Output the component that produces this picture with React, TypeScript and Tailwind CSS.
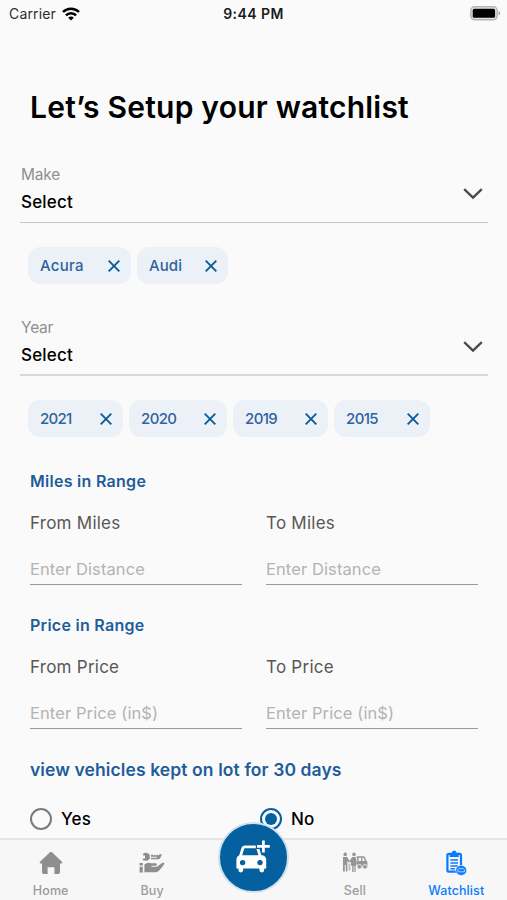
import type { ReactNode } from "react";
import clsx from "clsx";

const makes = [
  { label: "Acura", chip: "w-[103px] tracking-[0.25px]" },
  { label: "Audi", chip: "w-[91px] tracking-[0.1px]" },
];

const years = [
  { label: "2021", chip: "w-[95px] tracking-[-0.7px]" },
  { label: "2020", chip: "w-[98px] tracking-[-0.6px]" },
  { label: "2019", chip: "w-[95px] tracking-[-0.6px]" },
  { label: "2015", chip: "w-[96px] tracking-[-0.6px]" },
];

function WifiIcon() {
  return (
    <svg width="18" height="14" viewBox="0 0 18 14" fill="none" stroke="#000" strokeWidth="2.5">
      <path d="M1 5C5.4 0.5 12.6 0.5 17 5" />
      <path d="M3.9 8.3C6.7 5.4 11.3 5.4 14.1 8.3" />
      <path d="M9 13.5L6.2 10.7C7.7 9.2 10.3 9.2 11.8 10.7Z" fill="#000" stroke="none" />
    </svg>
  );
}

function BatteryIcon() {
  return (
    <svg width="31" height="15" viewBox="0 0 31 15">
      <rect x="0.8" y="0.8" width="26.4" height="13" rx="4" fill="#e4e4e4" stroke="#b4b4b4" strokeWidth="1.5" />
      <rect x="2.7" y="2.8" width="22.4" height="9" rx="1.6" fill="#000" />
      <path d="M28.6 5.2C30.8 5.8 30.8 8.8 28.6 9.4Z" fill="#a5a5a5" />
    </svg>
  );
}

function ChevronIcon() {
  return (
    <svg width="20" height="12" viewBox="0 0 20 12" fill="none" stroke="#4a4a4a" strokeWidth="2.3">
      <path d="M1.2 1.2L10 9.6L18.8 1.2" />
    </svg>
  );
}

function CloseIcon() {
  return (
    <svg width="12" height="12" viewBox="0 0 12 12" fill="none" stroke="#0a5c9c" strokeWidth="1.9">
      <path d="M0.7 0.7L11.3 11.3M11.3 0.7L0.7 11.3" />
    </svg>
  );
}

function HomeIcon() {
  return (
    <svg width="24" height="24" viewBox="0 0 24 24" fill="#8e8e8e">
      <path d="M11 1.2Q12 0.3 13 1.2L23 10.8Q24 12.2 22.4 12.6H21V21.3Q21 23 19.3 23H15.4V16.2H8.6V23H4.7Q3 23 3 21.3V12.6H1.6Q0 12.2 1 10.8Z" />
    </svg>
  );
}

function BuyIcon() {
  return (
    <svg width="26" height="22" viewBox="0 0 26 22" fill="#8e8e8e">
      <path d="M4.2 1.4Q7 0 9.2 1.6L10.8 2.8V6.8L8.8 8.4Q5.6 9.4 3.8 8L4 6.4H6V3.4H4Z" />
      <path d="M12 2.8H13.6L14.6 3.6L15.8 2.8L17 3.6L18.2 2.8L19.4 3.6L20.6 2.2H23L21.4 5.8Q20.8 7.2 19.4 7.2H12V5.8H18V4.8H12Z" />
      <path d="M0.6 11H3.8V13.6H0.6ZM0.6 14.8H3.8V20.4H0.6Z" />
      <path d="M5.4 12.4Q8.6 9.8 12 11.2H17.2Q18.8 12.6 17.2 13.8H12.4V14.8H18L22.2 11.4Q24.8 10.2 25.6 11.6Q23.6 15 20.2 18.6Q18.8 20.2 16.4 20.2H5.4Z" />
    </svg>
  );
}

function SellIcon() {
  return (
    <svg width="26" height="21" viewBox="0 0 26 21" fill="#959595">
      <circle cx="3.2" cy="2.4" r="1.8" />
      <path d="M1 5H5.2L7.8 9.6L7 10.8L5.4 9V19.6H3.8V13H2.8V19.6H1Z" />
      <circle cx="12" cy="2.4" r="1.8" />
      <path d="M10.2 5H13.6L14.6 9L14 13.4H13.6V20H12.4V14H11.6V20H10.2V13.4H9V10.6L7 9.6Z" />
      <path d="M6.6 11.6H8.4V18.4H6.6Z" opacity="0.6" />
      <path
        fillRule="evenodd"
        d="M14.6 4.2H22.4L24.4 8.8L25.4 9.8V15.4H15V12.4H14.4V9.4H15.4ZM16.6 5.8V9H19V5.8ZM20.4 5.8V9H22.8L21.6 5.8Z"
      />
      <circle cx="17.4" cy="14.8" r="2.3" stroke="#f7f7f7" strokeWidth="0.8" />
      <circle cx="23" cy="14.8" r="2.3" stroke="#f7f7f7" strokeWidth="0.8" />
    </svg>
  );
}

function WatchlistIcon() {
  return (
    <svg width="21" height="26" viewBox="0 0 21 26">
      <path
        d="M6.8 3.8H2.8Q1.4 3.8 1.4 5.2V20.2Q1.4 21.6 2.8 21.6H13.6Q15 21.6 15 20.2V5.2Q15 3.8 13.6 3.8Z"
        fill="#f7f7f7"
        stroke="#0a7aff"
        strokeWidth="2.2"
      />
      <path d="M3.6 7V3.2H5.6Q6 0.4 8.2 0.4T10.8 3.2H12.8V7Z" fill="#0a7aff" />
      <path d="M4.4 10H12M4.4 13H12M4.4 16H12M4.4 18.8H9" stroke="#0a7aff" strokeWidth="1.4" />
      <ellipse cx="15.2" cy="20.4" rx="5.4" ry="5" fill="#0a7aff" stroke="#f7f7f7" strokeWidth="0.6" />
      <path d="M12 19.8L13 18.6H17.4L18.4 19.8V21.8H12Z" fill="none" stroke="#b9dbff" strokeWidth="0.9" />
    </svg>
  );
}

function AddCarIcon() {
  return (
    <svg width="34" height="36" viewBox="0 0 34 36">
      <path
        d="M4.2 19L6.6 11Q7.2 8.9 9 8.9H19.6Q21.4 8.9 22 11L24.4 19"
        fill="none"
        stroke="#fff"
        strokeWidth="2.8"
      />
      <path d="M4 17.2H26.2Q30 18 30.2 21.4V30.4H28.2V32Q28.2 34.4 25.8 34.4T23.4 32V30.4H7.2V32Q7.2 34.4 4.8 34.4T2.4 32V30.4H0.4V21.4Q0.6 18 4 17.2Z" fill="#fff" />
      <circle cx="6.6" cy="24.6" r="2.7" fill="#04609f" />
      <circle cx="24" cy="24.6" r="2.7" fill="#04609f" />
      <path d="M27.4 2V16.4M19.8 8.4H33.4" stroke="#04609f" strokeWidth="5" />
      <path d="M27.4 2.4V14.4M21 8.4H33.8" stroke="#fff" strokeWidth="2.8" />
    </svg>
  );
}

function SelectField({ label, line }: { label: string; line: string }) {
  return (
    <button className={clsx("mr-5 ml-5 flex h-[62px] w-[468px] items-start justify-between text-left", line)}>
      <span className="flex flex-col pl-px">
        <span className="h-[27px] text-[15.5px] leading-[27px] tracking-[-0.2px] text-[#8f8f8f]">{label}</span>
        <span className="text-[17px] leading-[28px] font-medium tracking-[0.2px] text-black">Select</span>
      </span>
      <span className="mt-[27px] mr-[5px]">
        <ChevronIcon />
      </span>
    </button>
  );
}

function Chips({ items }: { items: { label: string; chip: string }[] }) {
  return (
    <div className="ml-7 flex h-[37px] gap-[6px]">
      {items.map((item) => (
        <button
          key={item.label}
          className={clsx(
            "flex items-center justify-between rounded-xl bg-[#ebf1f6] pr-[11px] pl-3 text-[15px] font-medium text-[#2d639f]",
            item.chip,
          )}
        >
          <span className="pt-px">{item.label}</span>
          <CloseIcon />
        </button>
      ))}
    </div>
  );
}

function RangeField({ label, hint }: { label: string; hint: string }) {
  return (
    <div className="h-[75px] w-[212px] border-b-[1.5px] border-[#9a9a9a]">
      <div className="h-[46px] text-[17px] leading-[27px] tracking-[0.25px] text-[#575757]">{label}</div>
      <div className="text-[16.5px] leading-[27px] tracking-[0.1px] text-[#b3b3b3]">{hint}</div>
    </div>
  );
}

function SectionTitle({ children }: { children: ReactNode }) {
  return (
    <h2 className="ml-[30px] h-7 text-[16px] leading-[29px] font-semibold tracking-[0.28px] text-[#1f5c9c]">
      {children}
    </h2>
  );
}

function Radio({ label, checked }: { label: string; checked?: boolean }) {
  return (
    <div className="flex w-[230px] items-center gap-[9px]">
      <span
        className={clsx(
          "flex size-[22px] items-center justify-center rounded-full border-2",
          checked ? "border-[#04609f]" : "border-[#7b7b7b]",
        )}
      >
        {checked && <span className="size-3 rounded-full bg-[#04609f]" />}
      </span>
      <span className="pt-px text-[17px] font-medium tracking-[0.2px] text-black">{label}</span>
    </div>
  );
}

function Tab({ label, icon, active }: { label: string; icon: ReactNode; active?: boolean }) {
  return (
    <div className={clsx("flex w-1/5 flex-col items-center pt-[9px]", active ? "text-[#0a7aff]" : "text-[#9b9b9b]")}>
      <span className="flex h-[28px] items-center">{icon}</span>
      <span className="mt-[5px] text-[12.5px] leading-[19px] font-medium tracking-[0.1px]">{label}</span>
    </div>
  );
}

export default function App() {
  return (
    <div className="relative h-[900px] w-[507px] overflow-hidden bg-[#fafafa] font-['Inter',sans-serif]">
      <header className="grid h-[27px] grid-cols-3 items-center text-[14px]">
        <div className="flex items-center gap-1.5 pl-[9px] text-[#2e2e2e]">
          <span className="tracking-[0.15px]">Carrier</span>
          <WifiIcon />
        </div>
        <div className="text-center font-semibold tracking-[0.45px] text-[#1a1a1a]">9:44 PM</div>
        <div className="flex justify-end pr-1.5">
          <BatteryIcon />
        </div>
      </header>

      <h1 className="mt-[58px] ml-[30px] h-[76px] text-[30px] leading-[44px] font-semibold tracking-[0.22px] text-black">
        Let’s Setup your watchlist
      </h1>

      <SelectField label="Make" line="border-b border-[#c8c8c8]" />
      <div className="mt-6">
        <Chips items={makes} />
      </div>
      <div className="mt-[30px]">
        <SelectField label="Year" line="border-b-2 border-[#d8d8d8]" />
      </div>
      <div className="mt-6">
        <Chips items={years} />
      </div>

      <section className="mt-[30px]">
        <SectionTitle>Miles in Range</SectionTitle>
        <div className="mt-[15px] ml-[30px] flex gap-6">
          <RangeField label="From Miles" hint="Enter Distance" />
          <RangeField label="To Miles" hint="Enter Distance" />
        </div>
      </section>

      <section className="mt-[26px]">
        <SectionTitle>Price in Range</SectionTitle>
        <div className="mt-[15px] ml-[30px] flex gap-6">
          <RangeField label="From Price" hint="Enter Price (in$)" />
          <RangeField label="To Price" hint="Enter Price (in$)" />
        </div>
      </section>

      <section className="mt-[27px]">
        <h2 className="ml-[30px] h-7 text-[17.5px] leading-7 font-semibold tracking-[0.1px] text-[#1f5c9c]">
          view vehicles kept on lot for 30 days
        </h2>
        <div className="mt-[22px] ml-[30px] flex">
          <Radio label="Yes" />
          <Radio label="No" checked />
        </div>
      </section>

      <nav className="absolute inset-x-0 bottom-0 flex h-[62px] border-t-2 border-[#e5e5e5] bg-[#f7f7f7]">
        <Tab label="Home" icon={<HomeIcon />} />
        <Tab label="Buy" icon={<BuyIcon />} />
        <div className="flex w-1/5 justify-center">
          <button className="-mt-[18px] flex size-[71px] shrink-0 items-center justify-center rounded-full border-[2.5px] border-[#cfe0ee] bg-[#04609f] pb-1">
            <AddCarIcon />
          </button>
        </div>
        <Tab label="Sell" icon={<SellIcon />} />
        <Tab label="Watchlist" icon={<WatchlistIcon />} active />
      </nav>
    </div>
  );
}
